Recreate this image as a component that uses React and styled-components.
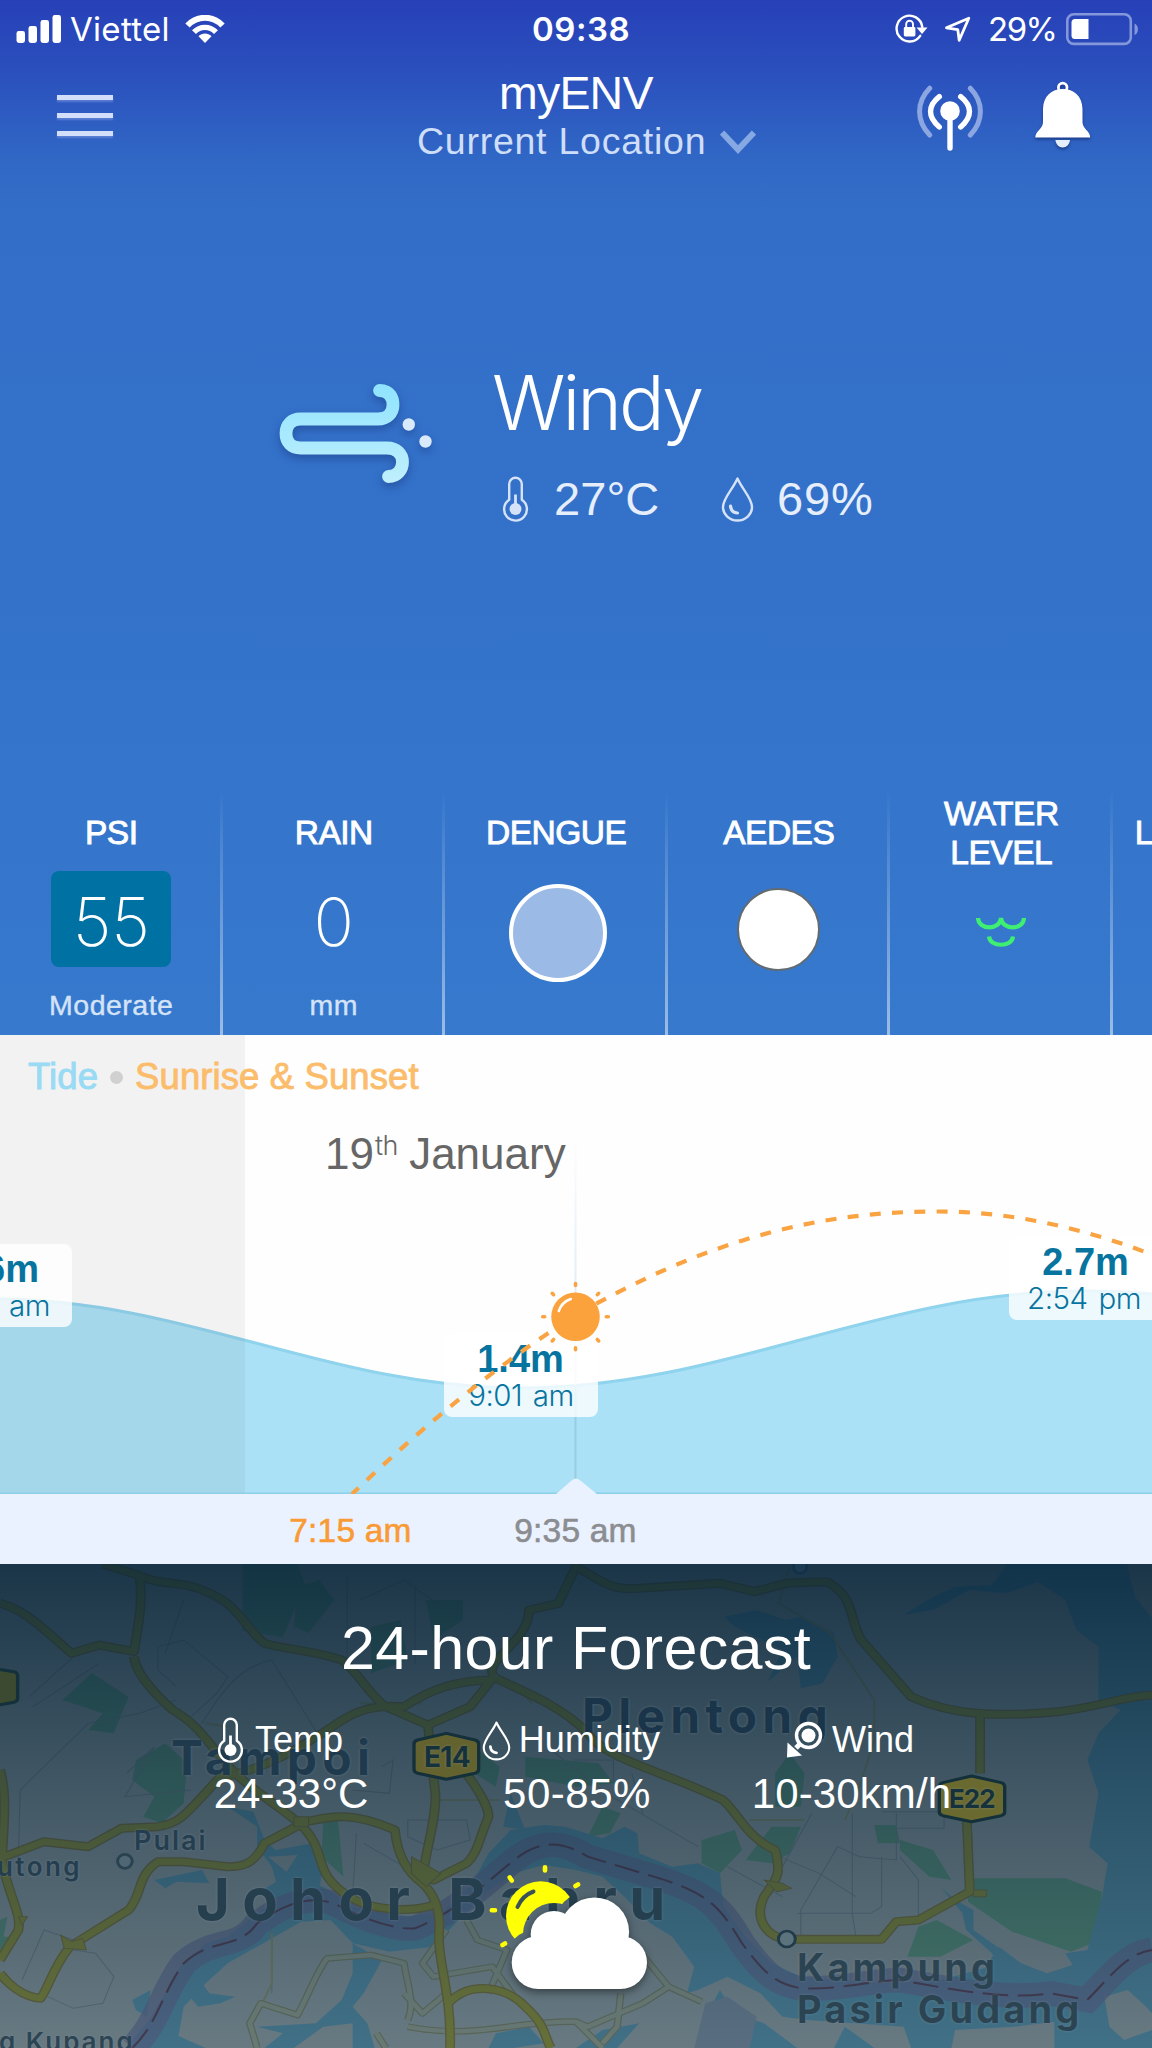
import React from "react";
import styled, { createGlobalStyle } from "styled-components";

const GlobalStyle = createGlobalStyle`
  * { box-sizing: border-box; }
  html, body { margin: 0; padding: 0; background: #3578cd; }
  svg { display: block; flex: none; }
`;

const HELV = `"Liberation Sans", Arial, sans-serif`;
const INTER = `Inter, "Liberation Sans", sans-serif`;

const Screen = styled.main`
  width: 1152px;
  height: 2048px;
  display: flex;
  flex-direction: column;
  overflow: hidden;
  font-family: ${HELV};
  color: #fff;
`;

/* ---------- hero ---------- */
const Hero = styled.section`
  height: 1035px;
  flex: none;
  display: flex;
  flex-direction: column;
  background: linear-gradient(180deg, #2740b8 0, #2a4dbc 60px, #316ac6 170px, #336fc8 230px, #3472ca 600px, #3679cd 1035px);
`;

const StatusBar = styled.div`
  height: 58px;
  flex: none;
  display: grid;
  grid-template-columns: 532px 1fr 257px;
  align-items: center;
  font-family: ${INTER};
  font-size: 33px;
  line-height: 40px;
`;
const StatusGroup = styled.div`
  display: flex;
  align-items: center;
  padding-left: ${(p) => p.$inset}px;
`;
const Carrier = styled.span`
  width: 115px;
  margin-left: 8px;
  letter-spacing: 0.3px;
  font-weight: 400;
`;
const Clock = styled.span`
  font-weight: 600;
  letter-spacing: 0.5px;
`;
const Percent = styled.span`
  width: 77px;
  margin-left: 17px;
  margin-right: 1px;
  letter-spacing: -1.5px;
`;

const Header = styled.header`
  height: 116px;
  flex: none;
  display: grid;
  grid-template-columns: 417px 1fr 235px;
  align-items: center;
`;
const MenuButton = styled.div`
  width: 56px;
  margin: 0 0 2px 57px;
  display: flex;
  flex-direction: column;
  gap: 13px;
`;
const MenuLine = styled.span`
  height: 5px;
  background: #d3defa;
  box-shadow: 0 2px 2px rgba(120, 150, 225, 0.6);
`;
const Titles = styled.div`
  display: flex;
  flex-direction: column;
  padding-top: 2px;
`;
const AppName = styled.h1`
  margin: 0;
  padding-left: 82px;
  font-size: 46.5px;
  line-height: 48px;
  font-weight: 400;
  letter-spacing: -0.8px;
`;
const Location = styled.div`
  display: flex;
  align-items: center;
  gap: 14px;
  font-size: 37.5px;
  line-height: 48px;
  letter-spacing: 0.75px;
  padding-left: 0;
  color: #cfdef8;
  white-space: nowrap;
`;
const HeaderIcons = styled.div`
  display: flex;
  align-items: center;
  gap: 49px;
`;

const Current = styled.div`
  height: 616px;
  flex: none;
  display: flex;
  align-items: flex-start;
  padding: 183px 0 0 273px;
`;
const WindArt = styled.div`
  width: 216px;
  padding-top: 21px;
`;
const Condition = styled.h2`
  margin: 0;
  font-family: ${INTER};
  font-size: 76px;
  line-height: 90px;
  font-weight: 300;
  letter-spacing: -3px;
  padding-left: 3px;
`;
const Readings = styled.div`
  display: flex;
  align-items: center;
  margin-top: 26px;
  padding-left: 13px;
  font-size: 47px;
  line-height: 52px;
  color: #e6eefb;
`;
const Reading = styled.span`
  width: ${(p) => p.$w}px;
  margin-left: ${(p) => p.$gap}px;
  letter-spacing: ${(p) => p.$ls}px;
  white-space: nowrap;
`;

const Tiles = styled.div`
  height: 245px;
  flex: none;
  display: flex;
`;
const Tile = styled.div`
  width: 222.5px;
  flex: none;
  display: flex;
  flex-direction: column;
  align-items: center;
  padding: 4px 0 0 3px;
  border-right: 3px solid transparent;
  border-image: linear-gradient(180deg, rgba(255, 255, 255, 0) 0, rgba(255, 255, 255, 0.5) 100%) 1;
  border-left: 0;
  border-top: 0;
  border-bottom: 0;
`;
const TileLabel = styled.div`
  height: 77px;
  display: flex;
  align-items: center;
  text-align: center;
  font-size: 33.5px;
  line-height: 39px;
  letter-spacing: -0.5px;
  -webkit-text-stroke: 0.9px #fff;
`;
const TileValue = styled.div`
  height: 116px;
  padding: ${(p) => p.$top || 0}px 0 0 ${(p) => p.$left || 0}px;
`;
const TileNumber = styled.div`
  width: 120px;
  height: 96px;
  padding-top: 6px;
  border-radius: 8px;
  background: ${(p) => p.$bg || "transparent"};
  font-family: ${INTER};
  font-size: 67px;
  line-height: 90px;
  font-weight: 250;
  letter-spacing: ${(p) => p.$ls || 0}px;
  text-align: center;
`;
const TileCaption = styled.div`
  font-size: 28.5px;
  line-height: 36px;
  color: #d5e3f7;
  letter-spacing: 0.5px;
  -webkit-text-stroke: 0.4px #d5e3f7;
`;
const Disc = styled.div`
  width: ${(p) => p.$size}px;
  height: ${(p) => p.$size}px;
  border-radius: 50%;
  background: ${(p) => p.$fill};
  border: ${(p) => p.$border};
`;

/* ---------- tide chart ---------- */
const Tide = styled.section`
  height: 529px;
  flex: none;
  position: relative;
  overflow: hidden;
  background: #fefefe;
`;
const ChartLayer = styled.svg`
  position: absolute;
  left: 0;
  top: 0;
`;
const Legend = styled.div`
  position: absolute;
  left: 28px;
  top: 20px;
  display: flex;
  align-items: center;
  font-size: 36.5px;
  line-height: 44px;
  white-space: nowrap;
`;
const LegendItem = styled.span`
  color: ${(p) => p.$color};
  -webkit-text-stroke: 0.9px ${(p) => p.$color};
  letter-spacing: ${(p) => p.$ls}px;
`;
const Dot = styled.span`
  width: 13px;
  height: 13px;
  border-radius: 50%;
  background: #d0d0d0;
  margin: 0 12px 0 12px;
`;
const DateLabel = styled.div`
  position: absolute;
  left: 325px;
  top: 93px;
  font-size: 44px;
  line-height: 52px;
  color: #666;
  white-space: nowrap;
  sup {
    font-size: 27px;
    line-height: 0;
    vertical-align: 14px;
    margin: 0 -1px 0 1px;
    font-family: ${INTER};
    font-weight: 300;
    letter-spacing: -0.5px;
  }
`;
const TideTag = styled.div`
  position: absolute;
  left: ${(p) => p.$x}px;
  top: ${(p) => p.$y}px;
  width: 154px;
  height: 83px;
  padding-top: 4px;
  border-radius: 8px;
  background: rgba(255, 255, 255, 0.8);
  text-align: center;
  color: #07749f;
  white-space: nowrap;
`;
const TideHeight = styled.div`
  font-size: 38px;
  line-height: 42px;
  font-weight: 700;
  padding-right: ${(p) => p.$pad || 1}px;
  text-align: ${(p) => p.$align || "center"};
`;
const TideTime = styled.div`
  font-family: ${INTER};
  font-weight: 300;
  font-size: 29.5px;
  line-height: 31px;
  letter-spacing: -0.5px;
  word-spacing: 3px;
  padding-right: ${(p) => p.$pad || 0}px;
  text-align: ${(p) => p.$align || "center"};
`;
const AxisLabel = styled.div`
  position: absolute;
  top: 475px;
  left: ${(p) => p.$x}px;
  width: 160px;
  text-align: center;
  font-size: 33.5px;
  line-height: 42px;
  letter-spacing: 0.2px;
  color: ${(p) => p.$color};
  -webkit-text-stroke: 0.6px ${(p) => p.$color};
`;

/* ---------- forecast ---------- */
const Forecast = styled.section`
  height: 484px;
  flex: none;
  position: relative;
  overflow: hidden;
  background: #2f4b5b;
`;
const MapLabel = styled.div`
  position: absolute;
  left: ${(p) => p.$x}px;
  top: ${(p) => p.$y}px;
  font-family: ${INTER};
  font-size: ${(p) => p.$size}px;
  line-height: ${(p) => p.$lh || p.$size}px;
  font-weight: ${(p) => p.$w || 700};
  letter-spacing: ${(p) => p.$ls}px;
  color: ${(p) => p.$color};
  white-space: nowrap;
  text-shadow: 0 0 3px rgba(150, 170, 180, 0.35);
`;
const ForecastBody = styled.div`
  position: relative;
  display: flex;
  flex-direction: column;
`;
const ForecastTitle = styled.h2`
  margin: 49px 0 0;
  text-align: center;
  font-size: 61px;
  line-height: 70px;
  font-weight: 400;
  letter-spacing: 0.35px;
`;
const Metrics = styled.div`
  display: grid;
  grid-template-columns: 284px 284px 284px;
  padding-left: 149px;
  margin-top: 33px;
`;
const Metric = styled.div`
  display: flex;
  flex-direction: column;
  align-items: center;
`;
const MetricHead = styled.div`
  height: 48px;
  display: flex;
  align-items: center;
  gap: ${(p) => p.$gap}px;
  margin-left: ${(p) => p.$shift}px;
  font-size: 36px;
  line-height: 48px;
  letter-spacing: ${(p) => p.$ls || 0}px;
`;
const MetricValue = styled.div`
  font-size: 42px;
  line-height: 50px;
  margin-top: 5px;
  margin-left: ${(p) => p.$shift}px;
  letter-spacing: ${(p) => p.$ls || 0}px;
`;
const SkyIcon = styled.div`
  padding-left: 488px;
  margin-top: 42px;
`;

/* ---------- icons ---------- */
const Signal = () => (
  <svg width="46" height="28" viewBox="0 0 46 28" fill="#fff">
    <rect x="0.5" y="16" width="8.5" height="12" rx="2.4" />
    <rect x="12.5" y="11" width="8.5" height="17" rx="2.4" />
    <rect x="24.5" y="5" width="8.5" height="23" rx="2.4" />
    <rect x="36.5" y="0" width="8.5" height="28" rx="2.4" />
  </svg>
);
const Wifi = () => (
  <svg width="40" height="29" viewBox="0 0 40 29" fill="none" stroke="#fff">
    <path d="M2.5 10.5C12.3 0.2 27.7 0.2 37.5 10.5" strokeWidth="6" />
    <path d="M9 17.2C15 10.8 25 10.8 31 17.2" strokeWidth="5.4" />
    <path d="M20 28l-6.5-6.8c3.6-3.6 9.4-3.6 13 0z" fill="#fff" stroke="none" />
  </svg>
);
const RotationLock = () => (
  <svg width="33" height="30" viewBox="0 0 33 30" fill="none" stroke="#fff" strokeWidth="2.4">
    <path d="M27.3 13A12.9 12.9 0 1 0 25.2 21.8" strokeLinecap="round" />
    <path d="M21.5 13.500h11L27 20z" fill="#fff" stroke="none" />
    <rect x="8.8" y="13" width="11.6" height="9.4" rx="1.4" fill="#fff" stroke="none" />
    <path d="M11.200 13.500v-3.400a3.400 3.400 0 0 1 6.800 0v3.400" strokeWidth="1.900" />
  </svg>
);
const Navigate = () => (
  <svg width="27" height="27" viewBox="0 0 27 27" fill="none" stroke="#fff" strokeWidth="2.800" strokeLinejoin="round">
    <path d="M24.800 2.200L15.200 24.300 13.800 13.600 2.400 11.800z" />
  </svg>
);
const Battery = () => (
  <svg width="74" height="33" viewBox="0 0 74 33">
    <rect x="1.300" y="1.300" width="63.500" height="29.600" rx="6.500" fill="none" stroke="#8397da" strokeWidth="2.600" />
    <path d="M68.500 10.500c4.600 1.600 4.600 10 0 11.600z" fill="#8397da" />
    <path d="M9 6h13.500v20H9a3.500 3.500 0 0 1-3.500-3.500v-13A3.500 3.500 0 0 1 9 6z" fill="#fff" />
  </svg>
);
const ChevronArt = styled.svg`
  margin-top: 2px;
`;
const Chevron = () => (
  <ChevronArt width="36" height="24" viewBox="0 0 36 24">
    <path d="M2 2.500L18 19.500 34 2.500" fill="none" stroke="#86a9e3" strokeWidth="6" />
  </ChevronArt>
);
const AntennaArt = styled.svg`
  margin-top: 4px;
`;
const Antenna = () => (
  <AntennaArt width="69" height="66" viewBox="0 0 69 66" fill="none" stroke="#fff" strokeLinecap="round">
    <circle cx="33" cy="26" r="9.800" fill="#fff" stroke="none" />
    <path d="M33 30v33" strokeWidth="5.400" />
    <path d="M22.300 11.700C10.600 21 10.600 32 22.300 42M43.700 11.700C55.400 21 55.400 32 43.700 42" strokeWidth="5.400" />
    <path d="M12.700 3.200C-.8 17-.8 36 12.700 50M53.300 3.200C66.800 17 66.800 36 53.300 50" strokeWidth="5" stroke="#8ca6e2" />
  </AntennaArt>
);
const BellArt = styled.svg`
  margin-top: 2px;
  filter: drop-shadow(0 2px 1.5px rgba(10, 30, 90, 0.55));
`;
const Bell = () => (
  <BellArt width="60" height="72" viewBox="0 0 60 72">
    <circle cx="27.700" cy="6.500" r="4.300" fill="none" stroke="#fff" strokeWidth="2.800" />
    <path d="M27.700 8C39 8 47.300 15 47.500 28V41C47.500 48 55.200 50 55.200 56.500H.3C.3 50 8 48 8 41V28C8.200 15 16.500 8 27.700 8z" fill="#fff" />
    <path d="M20.400 59h14.600c-.5 4.500-3.500 7.500-7.300 7.500s-6.800-3-7.300-7.500z" fill="#e6eefb" />
  </BellArt>
);
const WindSvg = styled.svg`
  filter: drop-shadow(0 4px 4px rgba(20, 50, 120, 0.45));
`;
const WindIcon = () => (
  <WindSvg width="170" height="118" viewBox="0 0 170 118">
    <defs>
      <linearGradient id="windFill" gradientUnits="userSpaceOnUse" x1="0" y1="6" x2="0" y2="105">
        <stop offset="0" stopColor="#8fe3ff" />
        <stop offset="1" stopColor="#c0effc" />
      </linearGradient>
    </defs>
    <path
      d="M106.500 12.500c11 0 13.500 8 13.500 14.500 0 8-6 14-15 14H27.500c-9 0-14.500 6-14.500 14.500s5.500 14.500 14.500 14.500H114c9.500 0 15.500 6 15.500 14 0 7-4.500 14.500-14 14.500"
      fill="none"
      stroke="url(#windFill)"
      strokeWidth="12.800"
      strokeLinecap="round"
    />
    <circle cx="135.800" cy="46.500" r="6.200" fill="#d9ebfb" />
    <circle cx="152.500" cy="63.500" r="6.200" fill="#d9ebfb" />
  </WindSvg>
);
const Thermometer = ({ color = "#d5e2f8" }) => (
  <svg width="27" height="46" viewBox="0 0 27 46" fill="none" stroke={color} strokeWidth="2.400">
    <path d="M7.200 8a6.300 6.300 0 0 1 12.600 0v15.700a11.400 11.400 0 1 1-12.600 0z" />
    <circle cx="13.500" cy="33" r="6" fill={color} stroke="none" />
    <path d="M13.500 18.500v14" strokeWidth="2.800" />
  </svg>
);
const Drop = ({ color = "#d5e2f8", w = 33, h = 46 }) => (
  <svg width={w} height={h} viewBox="0 0 33 46" fill="none" stroke={color} strokeWidth="2.400">
    <path d="M16.500 2.500C12 13 2 22 2 31a14.500 13.500 0 0 0 29 0C31 22 21 13 16.500 2.500z" strokeLinejoin="round" />
    <path d="M9.500 30c.4 4 3 6.800 7 7" strokeWidth="3.200" strokeLinecap="round" />
  </svg>
);
const WaterLevel = () => (
  <svg width="50" height="30" viewBox="0 0 50 30" fill="none" stroke="#3eef72" strokeWidth="4.200">
    <path d="M2 1c.5 12.500 22 12.500 23 0 1 12.500 22.500 12.500 23 0M13 19.500c.8 11 23.200 11 24 0" />
  </svg>
);
const WindVane = () => (
  <svg width="38" height="38" viewBox="0 0 38 38">
    <circle cx="22.500" cy="14.500" r="12" fill="#34505f" stroke="#fff" strokeWidth="3.400" />
    <circle cx="22.500" cy="14.500" r="7" fill="#fff" />
    <path d="M15 22l-5 5" stroke="#fff" strokeWidth="5" />
    <path d="M1.500 21.500L16 34.500 1 36.500z" fill="#fff" />
  </svg>
);
const CloudShape = styled.g`
  filter: drop-shadow(0 3px 4px rgba(0, 0, 0, 0.45));
`;
const SunCloud = () => (
  <svg width="170" height="142" viewBox="488 1862 170 142">
    <defs>
      <mask id="sunCut">
        <rect x="480" y="1850" width="200" height="170" fill="#fff" />
        <circle cx="554" cy="1935" r="31" fill="#000" />
        <circle cx="594.700" cy="1933" r="43" fill="#000" />
        <circle cx="538.200" cy="1963.500" r="33.500" fill="#000" />
      </mask>
    </defs>
    <g mask="url(#sunCut)">
      <circle cx="540.700" cy="1917" r="34.700" fill="#ffff05" />
      <path d="M517.500 1908q5-11.500 16-15.500" fill="none" stroke="#3b5158" strokeWidth="4" strokeLinecap="round" />
    </g>
    <path
      d="M545 1868.300v3.200M509.700 1878.500l2 3M491.800 1911.300h3.200M505 1944.500l-2.500 1.500M575.500 1887l2.500-1.500"
      stroke="#ffff05"
      strokeWidth="4.600"
      strokeLinecap="round"
    />
    <CloudShape fill="#fff">
      <circle cx="538.200" cy="1963.500" r="26.500" />
      <circle cx="620.500" cy="1963.500" r="26.500" />
      <circle cx="554" cy="1935.300" r="23.300" />
      <circle cx="594.500" cy="1933" r="34.600" />
      <rect x="538" y="1937" width="83" height="53" />
    </CloudShape>
  </svg>
);

/* ---------- map ---------- */
const STRAIT =
  "M360 1464C430 1390 440 1300 500 1210C580 1130 650 1170 700 1090C790 1020 850 1010 910 1030C1010 1090 1090 1110 1130 1105C1250 1050 1320 970 1400 900C1480 830 1540 850 1600 890L1780 950C1930 1000 1960 1040 2020 1150C2080 1240 2110 1270 2180 1285C2290 1290 2380 1260 2450 1260C2600 1290 2740 1320 2860 1300L2960 1320C3030 1240 3070 1180 3136 1170";

const MapArt = () => {
  const majors = [
    "M0 130C70 150 110 200 195 280L270 255 365 275 C375 200 390 130 380 50",
    "M280 12L375 45 C440 80 500 60 560 95 C650 130 670 210 720 250 C780 270 850 270 930 300 C970 330 1010 410 1050 440 L1165 495 1280 440 1345 350",
    "M365 290C370 350 440 420 470 450C550 500 570 560 640 640C700 700 760 740 815 790C900 880 840 930 950 1010 C1010 1050 1110 1060 1180 1035",
    "M1345 360C1240 360 1170 390 1100 440 C960 430 930 490 860 530 C780 590 680 640 600 650 C500 770 490 790 430 800 L330 805 240 860 120 845 0 895",
    "M1345 350C1310 300 1440 250 1440 150L1520 130 1568 20C1650 70 1660 90 1740 85L1960 70 2055 95 2140 70 2250 65C2330 110 2310 180 2345 240L2480 410C2600 470 2720 470 2880 455 3000 440 3050 410 3136 405",
    "M1350 355C1460 410 1540 450 1600 520C1650 600 1800 630 1968 720C2010 760 2030 830 2110 870C2130 950 2110 960 2080 1010C2050 1080 2090 1130 2140 1138L2400 1138 2440 1085 2500 1080 2640 995 2632 780M2668 450L2668 640",
    "M815 790C900 770 950 750 1075 810 1080 870 1100 930 1150 970C1150 900 1190 780 1185 700L1165 495M1240 600C1300 680 1330 740 1330 770C1300 850 1300 880 1270 910L1180 960 1140 950",
    "M815 795L720 850C690 920 650 920 620 920L500 905 430 905C370 950 390 1000 350 1050L190 1160C140 1230 130 1290 110 1315C60 1310 20 1270 0 1240M0 630C20 700 10 800 5 900C20 1000 60 1060 50 1110L0 1200",
    "M1150 970C1180 1000 1200 1050 1195 1120C1190 1200 1230 1300 1225 1464M1220 1330C1280 1260 1380 1280 1430 1340C1490 1400 1480 1430 1500 1464"
  ];
  const minor =
    "M1110 1380C1130 1330 1110 1280 1100 1210L1010 1185 890 1195C860 1240 850 1280 810 1365L710 1330 680 1390 700 1464M1110 1400C1300 1440 1400 1380 1568 1385L1640 1464M1100 1300L1150 1360 1215 1300M1215 1110L1150 1210 1180 1250 1340 1220 1400 1310M1270 1080L1300 1140 1380 1170 1330 1300M1568 1385L1600 1400 1750 1330 1820 1280 1910 1325 M1820 1280L1760 1200 1700 1130M1690 1300L1680 1400 1640 1450M1050 1464L1025 1420";
  const faint =
    "M50 895L55 690 240 490 380 460 480 420M550 490C600 400 650 320 740 300L830 460 870 530M430 260L500 240 620 350 590 400 520 470M430 260L430 330 480 380M345 640L420 560 340 710 520 690M945 50V320M1130 80V310M980 120L1100 60 1240 170M500 120L450 280M970 820L960 1010M990 850L1100 920M1110 780H1270L1280 840 1190 870 1110 830zM1980 920L2130 1010 M2320 760V1060L2330 1130M2100 880L2230 940 2330 1010M2210 760L2150 880 2090 1000M2440 760V900L2340 890 2280 860 2180 1050 2180 1138M2170 1060H2370L2400 1040V890M2450 890L2500 960 2500 1080M1500 570L1650 700 1900 860M2400 755H2570V805H2440M60 1260L120 1110 200 1140M740 1100V1300M130 1310L200 1345 280 1330 310 1250 260 1180 200 1170M80 410L200 290M90 440L270 310M1040 620L1070 600 1060 700 960 690M1720 640L1750 760M1560 600h110v70";
  return (
    <ChartLayer width="1152" height="484" viewBox="0 12 3136 1452" preserveAspectRatio="none">
      <defs>
        <linearGradient id="mapShade" x1="0" y1="0" x2="0" y2="1">
          <stop offset="0" stopColor="#08253a" stopOpacity="0.92" />
          <stop offset="0.5" stopColor="#132f41" stopOpacity="0.78" />
          <stop offset="1" stopColor="#1d3948" stopOpacity="0.65" />
        </linearGradient>
      </defs>
      <rect width="3136" height="1464" fill="#f3f1ec" />
      <g fill="#8fe0a4">
        <path d="M660 12h150l20 60-60 160-110-20zM810 80l60-20 40 60-70 100-40-20z" />
        <path d="M170 420l80-80 100 70-40 110-70-10 40-50z" />
        <path d="M370 600l80-50 60 60-10 120-60 60-50-20 30-60-60-50z" />
        <path d="M880 790l40-10 15 170-60-60z" />
        <path d="M1160 120h100v60l-80 60zM1010 200l80-20 20 120-100 40zM1430 590l200 20 40 60-100 10-140-30zM1290 560l70 60-10 60-60-40z" />
        <path d="M2110 640l40-60 40 60-10 100h-70zM2100 800h80l-30 80-50 30-70-10zM1910 840l90-30 20 60-60 70-50-30zM2380 795h60l10 55h-60z" />
        <path d="M2450 840l90 30 50 90-60-10-80-80zM2640 955h260l100 40-15 150-70 30-160-60-120-90zM2500 1100l50-20 100 60-90 50h-90z" />
        <path d="M0 1080l20-10-10 60 20 0-20 60H0zM1640 740l50 20-30 60-60 10z" />
      </g>
      <g fill="#84d8fb">
        <path d="M2740 12H3068L3090 110 3136 175V1464H2870V1385L2760 1400 2600 1410 2590 1464H2480L2460 1400 2200 1380 2130 1370 2070 1300 1980 1250 1900 1290 1870 1300 1890 1220 1830 1130 1770 1090 1700 1010 1640 950 1568 930 1480 915 1400 940 1320 1000 1240 1090 1180 1160 1060 1175 960 1150 900 1080 820 1085 700 1160 620 1210 560 1270 500 1340 480 1464H340L400 1390 450 1300 490 1220 560 1150 620 1130 700 1060 760 1020 700 1000 760 960 880 980 960 1040 1100 1070 1200 1060 1280 980 1330 880 1390 810 1480 795 1540 800 1640 835 1700 800 1735 820 1740 880 1830 920 1900 910 1960 940 1970 1040 2030 1130 2100 1210 2180 1250 2400 1270 2560 1260 2680 1225 2720 1160 2780 1210 2850 1240 2920 1215 2900 1180 2960 1170 3000 1010 3015 910 2965 860 2990 700 2960 600 2990 520 3050 450 2990 420 2990 260 2930 210 2900 120 2830 70z" />
        <path d="M2740 12H2870L2840 60 2740 100 2640 90 2540 150 2460 165 2540 110 2600 80 2700 75z" />
        <path d="M1970 170L2060 150 2140 180 2180 170 2270 220 2280 290 2240 370 2180 385 2170 290 2090 365 2130 270 2000 200z" />
        <path d="M620 740L690 755 720 840 750 870 850 850 880 900 870 990 760 1000 740 920 700 860 700 800z" />
        <path d="M420 960L550 930 570 970 480 965 450 985zM360 1320L410 1290 400 1370 370 1350zM500 1290L550 1270 570 1300 640 1310 600 1330 540 1340zM440 1464L470 1420 510 1440 560 1464z" />
        <path d="M960 1150L1040 1200 990 1300 960 1340 1000 1390 1020 1464H960V1390L880 1400 800 1464H720L770 1420 700 1400 860 1390 930 1320 960 1240z" />
        <path d="M1350 1420L1440 1400 1480 1450 1400 1464H1330zM1960 1290L2000 1360 2080 1390 2170 1464H2040L2000 1380 1930 1350zM1740 1390L1640 1410 1568 1464H1680zM2300 1400L2380 1464H2270z" />
        <path d="M1390 700L1430 810 1370 800zM2560 980L2600 1020 2650 1050 2650 1110 2740 1180 2720 1230 2700 1180 2630 1110 2620 1060z" />
      </g>
      <path d="M3006 1310L3070 1290 3120 1340 3136 1360V1410L3060 1440 3020 1400zM730 890l80-5-30 50z" fill="#f3f1ec" />
      <path d="M1920 1330l60-20 80 60-20 94h-150z" fill="#c9cfe8" />
      <path d={faint} fill="none" stroke="#b9bcc0" strokeWidth="3" />
      <path d="M2150 20L2120 130 2260 220 2380 420V540L2340 680 2300 780M2040 780H2190M560 490L620 500M1380 360L1450 430M980 430H1150M1190 720H1360M740 1120V1270L710 1340" fill="none" stroke="#e8d98c" strokeWidth="6" />
      <g fill="none" strokeLinejoin="round">
        <path d={minor} stroke="#c9b878" strokeWidth="20" />
        <path d={minor} stroke="#f6f2c8" strokeWidth="13" />
      </g>
      <g fill="none">
        <path d={STRAIT} stroke="#a39ad8" strokeOpacity="0.72" strokeWidth="74" />
        <path d={STRAIT} stroke="#8a3b58" strokeWidth="6" strokeDasharray="70 26" />
      </g>
      <g fill="none" strokeLinejoin="round">
        {majors.map((d) => (
          <path key={d} d={d} stroke="#c99a2a" strokeWidth="27" />
        ))}
        {majors.map((d) => (
          <path key={d} d={d} stroke="#ecd61c" strokeWidth="19" />
        ))}
        <path d="M165 1125l30 20 30-10 10 35-60-5zM50 1070h25l-15 25zM2080 960l50 10 25 15-40 10zM2650 990h35v20h-35zM800 770h40v30h-40zM1120 890l80 50-40 40-40-40z" fill="#ecd61c" stroke="#c99a2a" strokeWidth="3" />
      </g>
      <rect y="12" width="3136" height="1452" fill="url(#mapShade)" />
      <g stroke="#13303b" strokeWidth="9" strokeLinejoin="round">
        <path d="M1215 520L1293 540Q1303 543 1303 552V628Q1303 637 1293 640L1215 658 1137 640Q1127 637 1127 628V552Q1127 543 1137 540z" fill="#646330" />
        <path d="M2645 648L2725 668Q2735 671 2735 680V755Q2735 764 2725 767L2645 785 2567 767Q2557 764 2557 755V680Q2557 671 2567 668z" fill="#6a6a30" />
        <path d="M-60 318L38 335Q48 338 48 347V415Q48 424 38 427L-60 445z" fill="#3b4a31" />
      </g>
      <ellipse cx="340" cy="904" rx="20" ry="21" fill="#4f6774" stroke="#2a4250" strokeWidth="8" />
      <ellipse cx="2142" cy="1137" rx="23" ry="24" fill="#5c727c" stroke="#223b4a" strokeWidth="8" />
      <ellipse cx="2178" cy="20" rx="18" ry="20" fill="#1c3a50" stroke="#12304a" strokeWidth="7" />
    </ChartLayer>
  );
};

const SUN_PATH = "M352 459C430 385 500 328 576 280C690 215 800 176.500 935 176.500C1010 176 1085 193 1158 222";
const TIDE_LINE = "M-5 264C186 264 329 353 520 353C725 353 879 256 1084 256C1110 256 1135 257 1160 260";

export default function App() {
  return (
    <>
      <GlobalStyle />
      <Screen>
        <Hero>
          <StatusBar>
            <StatusGroup $inset={16}>
              <Signal />
              <Carrier>Viettel</Carrier>
              <Wifi />
            </StatusGroup>
            <Clock>09:38</Clock>
            <StatusGroup $inset={0}>
              <RotationLock />
              <StatusGroup $inset={16}>
                <Navigate />
              </StatusGroup>
              <Percent>29%</Percent>
              <Battery />
            </StatusGroup>
          </StatusBar>
          <Header>
            <MenuButton>
              <MenuLine />
              <MenuLine />
              <MenuLine />
            </MenuButton>
            <Titles>
              <AppName>myENV</AppName>
              <Location>
                <span>Current Location</span>
                <Chevron />
              </Location>
            </Titles>
            <HeaderIcons>
              <Antenna />
              <Bell />
            </HeaderIcons>
          </Header>
          <Current>
            <WindArt>
              <WindIcon />
            </WindArt>
            <div>
              <Condition>Windy</Condition>
              <Readings>
                <Thermometer />
                <Reading $w={167} $gap={25} $ls={0.1}>27°C</Reading>
                <Drop />
                <Reading $w={110} $gap={23} $ls={0.9}>69%</Reading>
              </Readings>
            </div>
          </Current>
          <Tiles>
            <Tile>
              <TileLabel>PSI</TileLabel>
              <TileValue>
                <TileNumber $bg="#0071a3" $ls={-0.3}>55</TileNumber>
              </TileValue>
              <TileCaption>Moderate</TileCaption>
            </Tile>
            <Tile>
              <TileLabel>RAIN</TileLabel>
              <TileValue>
                <TileNumber>0</TileNumber>
              </TileValue>
              <TileCaption>mm</TileCaption>
            </Tile>
            <Tile>
              <TileLabel>DENGUE</TileLabel>
              <TileValue $top={13} $left={3}>
                <Disc $size={98} $fill="#9bbae5" $border="4px solid #fff" />
              </TileValue>
            </Tile>
            <Tile>
              <TileLabel>AEDES</TileLabel>
              <TileValue $top={17}>
                <Disc $size={83} $fill="#fff" $border="2.5px solid #636a70" />
              </TileValue>
            </Tile>
            <Tile>
              <TileLabel>
                WATER
                <br />
                LEVEL
              </TileLabel>
              <TileValue $top={46}>
                <WaterLevel />
              </TileValue>
            </Tile>
            <Tile>
              <TileLabel>LIGHTNING</TileLabel>
            </Tile>
          </Tiles>
        </Hero>

        <Tide>
          <ChartLayer width="1152" height="529" viewBox="0 0 1152 529">
            <defs>
              <linearGradient id="nowLine" gradientUnits="userSpaceOnUse" x1="0" y1="100" x2="0" y2="250">
                <stop offset="0" stopColor="#e2edf5" stopOpacity="0" />
                <stop offset="1" stopColor="#e2edf5" />
              </linearGradient>
            </defs>
            <path d={TIDE_LINE + "V459H-5z"} fill="#aae1f6" />
            <path d={TIDE_LINE} fill="none" stroke="#8fd3ed" strokeWidth="3" />
            <rect width="245" height="459" fill="#5a5a5a" fillOpacity="0.075" />
            <rect x="574.500" y="100" width="2" height="250" fill="url(#nowLine)" />
            <path d="M575.500 350V444" stroke="#97cce1" strokeWidth="2" />
            <rect y="457.500" width="1152" height="2" fill="#8cd0ea" />
            <rect y="459" width="1152" height="70" fill="#ebf2ff" />
            <path d="M555 460L571 446Q576 441 581 446L598 460z" fill="#ebf2ff" />
          </ChartLayer>
          <Legend>
            <LegendItem $color="#99daf4" $ls={0.1}>Tide</LegendItem>
            <Dot />
            <LegendItem $color="#fbbd6c" $ls={0.1}>Sunrise &amp; Sunset</LegendItem>
          </Legend>
          <DateLabel>
            19<sup>th</sup> January
          </DateLabel>
          <TideTag $x={-82} $y={209}>
            <TideHeight $align="right" $pad={33}>6m</TideHeight>
            <TideTime $align="right" $pad={22}>am</TideTime>
          </TideTag>
          <TideTag $x={444} $y={299}>
            <TideHeight>1.4m</TideHeight>
            <TideTime>9:01 am</TideTime>
          </TideTag>
          <TideTag $x={1009} $y={202}>
            <TideHeight>2.7m</TideHeight>
            <TideTime $pad={4}>2:54 pm</TideTime>
          </TideTag>
          <ChartLayer width="1152" height="459" viewBox="0 0 1152 459">
            <path d={SUN_PATH} fill="none" stroke="#f9a342" strokeWidth="4.200" strokeDasharray="11 11.300" strokeDashoffset="2" />
            <circle cx="575.500" cy="281.700" r="24.300" fill="#fba23c" />
            <path d="M558.800 276q3-9 12-12" fill="none" stroke="#fff" strokeWidth="2.600" strokeLinecap="round" />
            <path
              d="M575.500 248.500v2M575.500 312.700v2M542.700 281.700h2M606.300 281.700h2M552.200 258.300l1.400 1.400M597.300 304.500l1.400 1.400M552.200 305.900l1.400-1.400M597.300 259.700l1.400-1.400"
              stroke="#f9a342"
              strokeWidth="3.600"
              strokeLinecap="round"
            />
          </ChartLayer>
          <AxisLabel $x={270.500} $color="#f99a35">7:15 am</AxisLabel>
          <AxisLabel $x={495.500} $color="#8b8d91">9:35 am</AxisLabel>
        </Tide>

        <Forecast>
          <MapArt />
          <MapLabel $x={171} $y={170} $size={48} $ls={5.200} $color="#1f3a4d">Tampoi</MapLabel>
          <MapLabel $x={582} $y={128} $size={48} $ls={5.200} $color="#1a3549">Plentong</MapLabel>
          <MapLabel $x={424} $y={179} $size={28} $ls={-0.700} $color="#15323c">E14</MapLabel>
          <MapLabel $x={949} $y={222} $size={26} $ls={-1} $color="#15323c">E22</MapLabel>
          <MapLabel $x={134} $y={263} $size={27} $ls={2} $w={600} $color="#253e4f">Pulai</MapLabel>
          <MapLabel $x={-3} $y={290} $size={26} $ls={2.400} $w={600} $color="#253e4f">utong</MapLabel>
          <MapLabel $x={196} $y={306} $size={58} $ls={12.300} $color="#263f4f">Johor Bahru</MapLabel>
          <MapLabel $x={-1} $y={465} $size={26} $ls={2} $w={600} $color="#2d4553">g Kupang</MapLabel>
          <MapLabel $x={797} $y={382} $size={38} $lh={42} $ls={3.100} $color="#2c4452">
            Kampung
            <br />
            Pasir Gudang
          </MapLabel>
          <ForecastBody>
            <ForecastTitle>24-hour Forecast</ForecastTitle>
            <Metrics>
              <Metric>
                <MetricHead $gap={11} $shift={-22} $ls={0}>
                  <Thermometer color="#fff" />
                  Temp
                </MetricHead>
                <MetricValue $shift={0}>24-33°C</MetricValue>
              </Metric>
              <Metric>
                <MetricHead $gap={8} $shift={-8} $ls={0.200}>
                  <Drop color="#fff" w={29} h={41} />
                  Humidity
                </MetricHead>
                <MetricValue $shift={4} $ls={0.500}>50-85%</MetricValue>
              </Metric>
              <Metric>
                <MetricHead $gap={8} $shift={-18}>
                  <WindVane />
                  Wind
                </MetricHead>
                <MetricValue $shift={-15} $ls={0.100}>10-30km/h</MetricValue>
              </Metric>
            </Metrics>
            <SkyIcon>
              <SunCloud />
            </SkyIcon>
          </ForecastBody>
        </Forecast>
      </Screen>
    </>
  );
}
